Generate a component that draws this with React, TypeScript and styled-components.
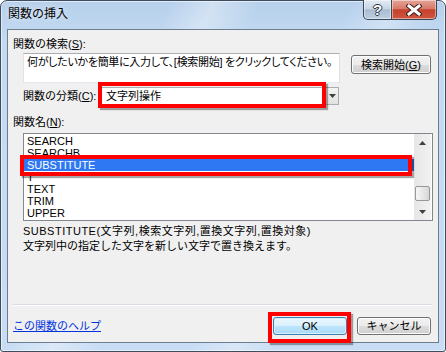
import React from "react";
import styled, { createGlobalStyle } from "styled-components";

const ui = `"Liberation Sans", "Noto Sans CJK JP", sans-serif`;

const Global = createGlobalStyle`
    html, body {
        margin: 0;
        padding: 0;
    }
    body {
        width: 446px;
        height: 352px;
        overflow: hidden;
        background: #ffffff;
        font-family: ${ui};
    }
    * {
        box-sizing: border-box;
    }
`;

const Frame = styled.div`
    width: 446px;
    height: 352px;
    display: flex;
    flex-direction: column;
    border: 1px solid #3d4c5e;
    border-radius: 7px 7px 3px 3px;
    box-shadow: inset 0 0 0 1px rgba(255, 255, 255, 0.55);
    background:
        linear-gradient(115deg, transparent 0 28%, rgba(255, 255, 255, 0.35) 35%, transparent 43%,
            transparent 58%, rgba(255, 255, 255, 0.3) 65%, transparent 72%),
        linear-gradient(180deg, #b7d0eb 0%, #c3daf2 12%, #c8ddf4 100%);
`;

const TitleBar = styled.div`
    height: 28px;
    display: flex;
    align-items: flex-start;
    justify-content: space-between;
`;

const Title = styled.div`
    padding: 5px 0 0 7px;
    font: 12px/16px ${ui};
    color: #000;
    text-shadow: 0 0 6px rgba(255, 255, 255, 0.9);
`;

const Captions = styled.div`
    display: flex;
    margin: -1px 8px 0 0;
`;

const CaptionButton = styled.div<{ $close?: boolean }>`
    width: ${(p) => (p.$close ? 45 : 29)}px;
    height: 20px;
    display: flex;
    align-items: center;
    justify-content: center;
    border: 1px solid #3a4757;
    border-top: none;
    border-left: ${(p) => (p.$close ? "none" : "1px solid #3a4757")};
    border-radius: ${(p) => (p.$close ? "0 0 5px 0" : "0 0 0 5px")};
    box-shadow: inset 0 0 0 1px rgba(255, 255, 255, 0.45);
    background: ${(p) =>
        p.$close
            ? "linear-gradient(180deg, #e6a497 0%, #d77a69 45%, #c5412d 52%, #cf5540 100%)"
            : "linear-gradient(180deg, #e3ebf4 0%, #c9d6e4 45%, #a9bcd1 52%, #bfcfe1 100%)"};
`;

const HelpGlyph = styled.span`
    font: bold 15px/16px "Liberation Sans", sans-serif;
    color: #fff;
    text-shadow: 1px 0 0 #2a3440, -1px 0 0 #2a3440, 0 1px 0 #2a3440, 0 -1px 0 #2a3440;
`;

const Client = styled.div`
    flex: 1;
    margin: 0 6px 8px 6px;
    border: 1px solid #6d7c8e;
    background: #f0f0f0;
    display: flex;
    flex-direction: column;
    padding: 0 5px 0 5px;
`;

const Label = styled.div<{ $top: number }>`
    margin-top: ${(p) => p.$top}px;
    font: 11px/14px ${ui};
    color: #000;
    white-space: nowrap;
`;

const Key = styled.span`
    text-decoration: underline;
`;

const SearchRow = styled.div`
    display: flex;
    align-items: flex-start;
    margin-top: 2px;
    padding-left: 10px;
`;

const TextBox = styled.div`
    flex: 1;
    height: 30px;
    padding: 1px 0 0 3px;
    background: #fff;
    border: 1px solid #abadb3;
    border-color: #abadb3 #dbdfe6 #e3e9ef #e2e3ea;
    font: 11px/14px ${ui};
    font-feature-settings: "palt";
    letter-spacing: -0.3px;
    color: #000;
    white-space: nowrap;
    overflow: hidden;
`;

const Button = styled.div<{ $width: number; $default?: boolean }>`
    width: ${(p) => p.$width}px;
    height: 18px;
    display: flex;
    align-items: center;
    justify-content: center;
    position: relative;
    border: 1px solid ${(p) => (p.$default ? "#3c7fb1" : "#707070")};
    border-radius: 3px;
    box-shadow: inset 0 0 0 1px ${(p) => (p.$default ? "#d6effc" : "#fcfcfc")};
    background: ${(p) =>
        p.$default
            ? "linear-gradient(180deg, #eaf6fd 0%, #d9f0fc 50%, #bee6fd 50%, #a7d9f5 100%)"
            : "linear-gradient(180deg, #f2f2f2 0%, #ebebeb 50%, #dddddd 50%, #cfcfcf 100%)"};
    font: 11px/14px ${ui};
    color: #000;
`;

const SearchButton = styled(Button)`
    margin: 2px 2px 0 11px;
    height: 19px;
`;

const CategoryRow = styled.div`
    display: flex;
    align-items: center;
    margin-top: 4px;
    padding-left: 10px;
    height: 18px;
`;

const CategoryLabel = styled.div`
    width: 78px;
    font: 11px/18px ${ui};
    color: #000;
    white-space: nowrap;
`;

const Select = styled.div`
    position: relative;
    width: 238px;
    height: 18px;
    display: flex;
    background: #fff;
    border: 1px solid #abadb3;
`;

const SelectValue = styled.div`
    flex: 1;
    padding-left: 4px;
    font: 11px/16px ${ui};
    color: #000;
`;

const SelectArrow = styled.div`
    width: 13px;
    display: flex;
    align-items: center;
    justify-content: center;
    border-left: 1px solid #8a8a8a;
    background: linear-gradient(180deg, #f4f4f4 0%, #e2e2e2 100%);
`;

const Mark = styled.div<{ $l: number; $t: number; $w: number; $h: number }>`
    position: absolute;
    left: ${(p) => p.$l}px;
    top: ${(p) => p.$t}px;
    width: ${(p) => p.$w}px;
    height: ${(p) => p.$h}px;
    border: 4px solid #ff0000;
    box-shadow: 2px 2px 1px rgba(0, 0, 0, 0.35);
    pointer-events: none;
    z-index: 2;
`;

const List = styled.div`
    margin: 4px 0 0 10px;
    height: 88px;
    display: flex;
    background: #fff;
    border: 1px solid #828790;
    padding: 0 1px 0 0;
`;

const Items = styled.div`
    flex: 1;
    padding-top: 1px;
`;

const Item = styled.div<{ $selected?: boolean }>`
    position: relative;
    height: 12px;
    padding-left: 3px;
    font: 11px/12px ${ui};
    color: ${(p) => (p.$selected ? "#fff" : "#000")};
    background: ${(p) => (p.$selected ? "#2f78f3" : "transparent")};
    white-space: nowrap;
`;

const ScrollBar = styled.div`
    width: 17px;
    display: flex;
    flex-direction: column;
    background: linear-gradient(90deg, #e6e6e6 0%, #f2f2f2 100%);
`;

const ScrollButton = styled.div`
    height: 17px;
    display: flex;
    align-items: center;
    justify-content: center;
`;

const Track = styled.div`
    flex: 1;
    display: flex;
    flex-direction: column;
    justify-content: flex-end;
    padding-bottom: 2px;
`;

const Thumb = styled.div`
    height: 15px;
    margin: 0 1px;
    border: 1px solid #979797;
    border-radius: 2px;
    background: linear-gradient(90deg, #f6f6f6 0%, #e8e8e8 50%, #d6d6d6 100%);
`;

const Description = styled.div`
    margin-top: 3px;
    padding-left: 10px;
    font: 11px/15px ${ui};
    color: #000;
    white-space: nowrap;
`;

const DescLine = styled.div<{ $spacing?: number }>`
    letter-spacing: ${(p) => p.$spacing ?? 0}px;
`;

const Spacer = styled.div`
    flex: 1;
`;

const Separator = styled.div`
    height: 2px;
    border-top: 1px solid #d5dbe1;
    border-bottom: 1px solid #ffffff;
    margin-right: 1px;
`;

const BottomRow = styled.div`
    display: flex;
    align-items: center;
    margin: 11px 2px 7px 0;
    gap: 10px;
`;

const HelpLink = styled.a`
    flex: 1;
    font: 11px/18px ${ui};
    color: #0033dd;
    text-decoration: underline;
`;

const functions = ["SEARCH", "SEARCHB", "SUBSTITUTE", "T", "TEXT", "TRIM", "UPPER"];

function Arrow({ up }: { up?: boolean }) {
    return (
        <svg width="7" height="4" viewBox="0 0 7 4">
            <path d={up ? "M0 4 L3.5 0 L7 4 Z" : "M0 0 L7 0 L3.5 4 Z"} fill="#404040" />
        </svg>
    );
}

function App() {
    return (
        <>
            <Global />
            <Frame>
                <TitleBar>
                    <Title>関数の挿入</Title>
                    <Captions>
                        <CaptionButton>
                            <HelpGlyph>?</HelpGlyph>
                        </CaptionButton>
                        <CaptionButton $close>
                            <svg width="16" height="12" viewBox="0 0 16 12">
                                <path d="M3 2 L13 10 M13 2 L3 10" stroke="#3a1e1a" strokeWidth="5" strokeLinecap="square" />
                                <path d="M3 2 L13 10 M13 2 L3 10" stroke="#ffffff" strokeWidth="3" strokeLinecap="square" />
                            </svg>
                        </CaptionButton>
                    </Captions>
                </TitleBar>
                <Client>
                    <Label $top={7}>
                        関数の検索(<Key>S</Key>):
                    </Label>
                    <SearchRow>
                        <TextBox>何がしたいかを簡単に入力して、[検索開始] をクリックしてください。</TextBox>
                        <SearchButton $width={80}>
                            検索開始(<Key>G</Key>)
                        </SearchButton>
                    </SearchRow>
                    <CategoryRow>
                        <CategoryLabel>
                            関数の分類(<Key>C</Key>):
                        </CategoryLabel>
                        <Select>
                            <SelectValue>文字列操作</SelectValue>
                            <SelectArrow>
                                <Arrow />
                            </SelectArrow>
                            <Mark $l={-4} $t={-6} $w={228} $h={26} />
                        </Select>
                    </CategoryRow>
                    <Label $top={10}>
                        関数名(<Key>N</Key>):
                    </Label>
                    <List>
                        <Items>
                            {functions.map((name) => (
                                <Item key={name} $selected={name === "SUBSTITUTE"}>
                                    {name}
                                    {name === "SUBSTITUTE" && <Mark $l={-4} $t={-4} $w={392} $h={21} />}
                                </Item>
                            ))}
                        </Items>
                        <ScrollBar>
                            <ScrollButton>
                                <Arrow up />
                            </ScrollButton>
                            <Track>
                                <Thumb />
                            </Track>
                            <ScrollButton>
                                <Arrow />
                            </ScrollButton>
                        </ScrollBar>
                    </List>
                    <Description>
                        <DescLine $spacing={0.5}>SUBSTITUTE(文字列,検索文字列,置換文字列,置換対象)</DescLine>
                        <DescLine>文字列中の指定した文字を新しい文字で置き換えます。</DescLine>
                    </Description>
                    <Spacer />
                    <Separator />
                    <BottomRow>
                        <HelpLink>この関数のヘルプ</HelpLink>
                        <Button $width={74} $default>
                            OK
                            <Mark $l={-6} $t={-6} $w={83} $h={31} />
                        </Button>
                        <Button $width={74}>キャンセル</Button>
                    </BottomRow>
                </Client>
            </Frame>
        </>
    );
}

export default App;
